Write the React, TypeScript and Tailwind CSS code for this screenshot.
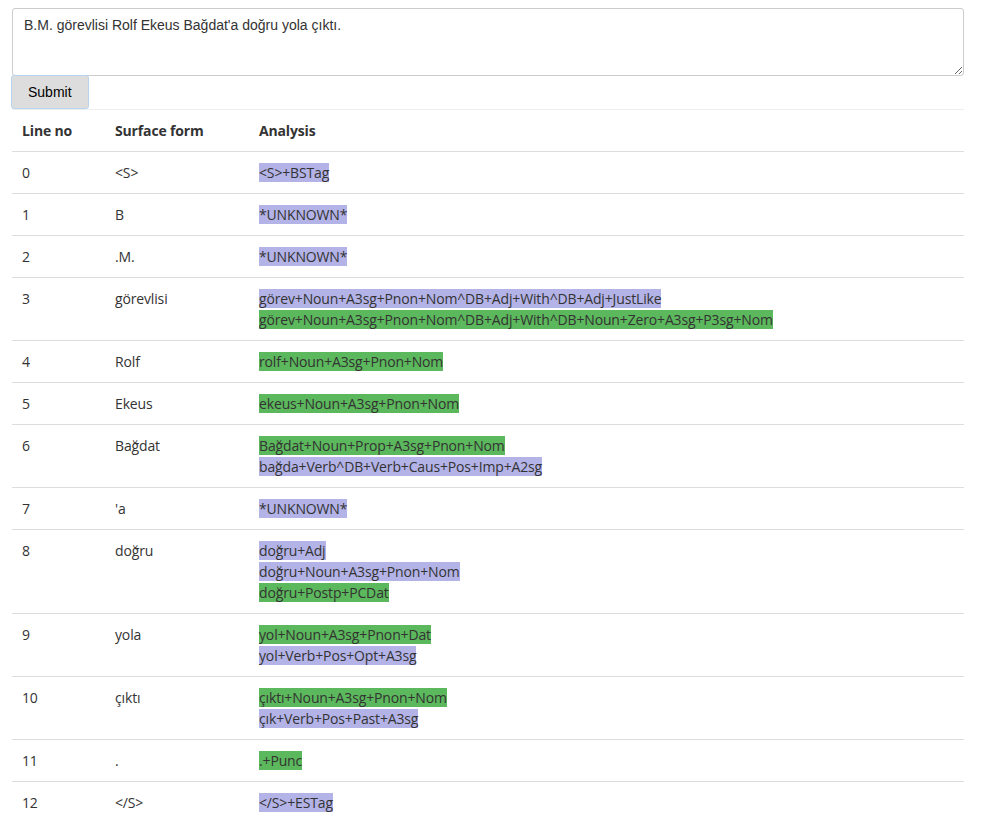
const rows: { n: number; form: string; an: [string, "p" | "g"][] }[] = [
  { n: 0, form: "<S>", an: [["<S>+BSTag", "p"]] },
  { n: 1, form: "B", an: [["*UNKNOWN*", "p"]] },
  { n: 2, form: ".M.", an: [["*UNKNOWN*", "p"]] },
  {
    n: 3,
    form: "görevlisi",
    an: [
      ["görev+Noun+A3sg+Pnon+Nom^DB+Adj+With^DB+Adj+JustLike", "p"],
      ["görev+Noun+A3sg+Pnon+Nom^DB+Adj+With^DB+Noun+Zero+A3sg+P3sg+Nom", "g"],
    ],
  },
  { n: 4, form: "Rolf", an: [["rolf+Noun+A3sg+Pnon+Nom", "g"]] },
  { n: 5, form: "Ekeus", an: [["ekeus+Noun+A3sg+Pnon+Nom", "g"]] },
  {
    n: 6,
    form: "Bağdat",
    an: [
      ["Bağdat+Noun+Prop+A3sg+Pnon+Nom", "g"],
      ["bağda+Verb^DB+Verb+Caus+Pos+Imp+A2sg", "p"],
    ],
  },
  { n: 7, form: "'a", an: [["*UNKNOWN*", "p"]] },
  {
    n: 8,
    form: "doğru",
    an: [
      ["doğru+Adj", "p"],
      ["doğru+Noun+A3sg+Pnon+Nom", "p"],
      ["doğru+Postp+PCDat", "g"],
    ],
  },
  {
    n: 9,
    form: "yola",
    an: [
      ["yol+Noun+A3sg+Pnon+Dat", "g"],
      ["yol+Verb+Pos+Opt+A3sg", "p"],
    ],
  },
  {
    n: 10,
    form: "çıktı",
    an: [
      ["çıktı+Noun+A3sg+Pnon+Nom", "g"],
      ["çık+Verb+Pos+Past+A3sg", "p"],
    ],
  },
  { n: 11, form: ".", an: [[".+Punc", "g"]] },
  { n: 12, form: "</S>", an: [["</S>+ESTag", "p"]] },
];

export default function App() {
  return (
    <div className="bg-white min-h-screen pl-3 pr-5 pt-2 text-[#333]">
      <textarea
        defaultValue="B.M. görevlisi Rolf Ekeus Bağdat'a doğru yola çıktı."
        className="block w-full h-[68px] border border-[#ccc] rounded-[3px] px-[11px] py-[6px] text-sm leading-5 text-[#333] font-['Liberation_Sans',Arial,sans-serif] outline-none"
      />
      <button className="-ml-px -mt-px block h-[34px] px-4 bg-[#dddddd] border border-[#b8d4ee] rounded-[3px] text-sm text-black font-['Liberation_Sans',Arial,sans-serif]">
        Submit
      </button>
      <table className="w-full border-collapse text-sm leading-[21px] tracking-[-0.15px] font-['Open_Sans',sans-serif]">
        <thead>
          <tr className="border-t border-[#eee] border-b border-b-[#ddd]">
            <th className="w-[93px] text-left font-bold pl-[10px] py-[10px]">Line no</th>
            <th className="w-[144px] text-left font-bold pl-[10px] py-[10px]">Surface form</th>
            <th className="text-left font-bold pl-[10px] py-[10px]">Analysis</th>
          </tr>
        </thead>
        <tbody>
          {rows.map((r) => (
            <tr key={r.n} className="border-b border-[#ddd] align-top">
              <td className="pl-[10px] py-[10px]">{r.n}</td>
              <td className="pl-[10px] py-[10px]">{r.form}</td>
              <td className="pl-[10px] py-[10px]">
                {r.an.map(([t, c], i) => (
                  <div key={i}>
                    <span className={c === "g" ? "bg-[#5cb85c]" : "bg-[#b3b3e8]"}>{t}</span>
                  </div>
                ))}
              </td>
            </tr>
          ))}
        </tbody>
      </table>
    </div>
  );
}
